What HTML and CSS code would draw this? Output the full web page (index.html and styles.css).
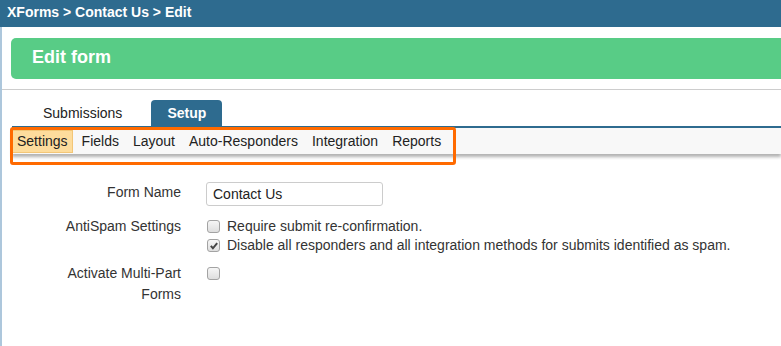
FILE: index.html
```html
<!DOCTYPE html>
<html lang="en">
<head>
    <meta charset="UTF-8">
    <meta name="viewport" content="width=device-width, initial-scale=1.0">
    <link rel="stylesheet" href="styles.css">
    <title>Edit form</title>
</head>
<body>
    <header class="topbar">XForms &gt; Contact Us &gt; Edit</header>

    <main class="page">
        <div class="title-bar">
            <h1 class="title">Edit form</h1>
        </div>

        <hr class="divider">

        <div class="tabs">
            <a href="#" class="tab">Submissions</a>
            <a href="#" class="tab active">Setup</a>
        </div>

        <nav class="subnav">
            <a href="#" class="subnav-item current">Settings</a>
            <a href="#" class="subnav-item">Fields</a>
            <a href="#" class="subnav-item">Layout</a>
            <a href="#" class="subnav-item">Auto-Responders</a>
            <a href="#" class="subnav-item">Integration</a>
            <a href="#" class="subnav-item">Reports</a>
        </nav>

        <!-- annotation frame around the sub menu -->
        <div class="marker"></div>

        <form class="settings" action="" method="POST">
            <div class="row row-name">
                <label class="row-label" for="name">Form Name</label>
                <input type="text" id="name" name="name" value="Contact Us" class="text-input">
            </div>

            <div class="row row-spam">
                <div class="row-label">AntiSpam Settings</div>
                <div class="options">
                    <label class="option"><input type="checkbox" class="check">Require submit re-confirmation.</label>
                    <label class="option"><input type="checkbox" class="check" checked>Disable all responders and all integration methods for submits identified as spam.</label>
                </div>
            </div>

            <div class="row">
                <label class="row-label" for="multipart">Activate Multi-Part Forms</label>
                <div class="options">
                    <input type="checkbox" id="multipart" class="check">
                </div>
            </div>
        </form>
    </main>
</body>
</html>
```

FILE: styles.css
```css
*{
    box-sizing: border-box;
}

html, body{
    height: 100%;
}

body{
    margin: 0;
    font-family: "Liberation Sans", Arial, sans-serif;
    font-size: 14px;
    color: #333;
    background-color: #fff;
    overflow: hidden;
}

.topbar{
    height: 27px;
    line-height: 25px;
    padding-left: 7px;
    background-color: #2e6b8f;
    color: #fff;
    font-weight: bold;
    font-size: 14px;
}

.page{
    position: relative;
    min-height: calc(100% - 27px);
    border-left: 2px solid #adc7dc;
    overflow: hidden;
}

.title-bar{
    margin: 11px -20px 0 9px;
    height: 41px;
    padding-left: 21px;
    background-color: #58cc86;
    border-radius: 5px;
}

.title{
    margin: 0;
    line-height: 38px;
    font-size: 18px;
    font-weight: bold;
    color: #fff;
}

.divider{
    margin: 10px 0 0;
    border: none;
    border-top: 1px solid #cdcdcd;
}

.tabs{
    display: flex;
    gap: 13px;
    margin: 10px 0 0 10px;
    padding-left: 15px;
    border-bottom: 2px solid #2e6b8f;
}

.tab{
    display: block;
    padding: 0 16px;
    line-height: 26px;
    color: #222;
    text-decoration: none;
    border-radius: 4px 4px 0 0;
}

.tab.active{
    background-color: #2e6b8f;
    color: #fff;
    font-weight: bold;
}

.subnav{
    display: flex;
    gap: 4px;
    margin-left: 10px;
    padding: 2px 0 1px;
    background-color: #f8f8f8;
    box-shadow: 0 3px 3px rgba(0, 0, 0, 0.3);
}

.subnav-item{
    display: block;
    padding: 0 4px;
    line-height: 21px;
    border: 1px solid transparent;
    color: #222;
    text-decoration: none;
}

.subnav-item.current{
    background-color: #fddc9c;
    border-color: #f3c677;
}

.marker{
    position: absolute;
    top: 100px;
    left: 8px;
    width: 446px;
    height: 38px;
    border: 3px solid #ff6a00;
    border-radius: 3px;
}

.settings{
    margin-top: 28px;
    padding-left: 29px;
}

.row{
    display: flex;
    align-items: flex-start;
    margin-bottom: 8px;
}

.row-name{
    margin-bottom: 10px;
}

.row-label{
    flex: none;
    width: 150px;
    margin-right: 25px;
    text-align: right;
    line-height: 21px;
}

.text-input{
    width: 177px;
    height: 24px;
    padding: 0 6px;
    border: 1px solid #ccc;
    border-radius: 3px;
    font-family: inherit;
    font-size: 14px;
    color: #222;
}

.options{
    padding-top: 1px;
}

.option{
    display: flex;
    align-items: center;
    line-height: 19px;
}

.check{
    -webkit-appearance: none;
    appearance: none;
    flex: none;
    display: block;
    width: 13px;
    height: 13px;
    margin: 3px 7px 3px 1px;
    border: 1px solid #a3a3a3;
    border-radius: 3px;
    background: linear-gradient(#f6f6f6, #dedede);
}

.check:checked{
    background: url("data:image/svg+xml,%3Csvg xmlns='http://www.w3.org/2000/svg' viewBox='0 0 11 11'%3E%3Cpath d='M2 5.4 L4.3 8 L9 2.4' fill='none' stroke='%23444' stroke-width='2.2'/%3E%3C/svg%3E") center / 10px 10px no-repeat, linear-gradient(#f6f6f6, #dedede);
}
```
